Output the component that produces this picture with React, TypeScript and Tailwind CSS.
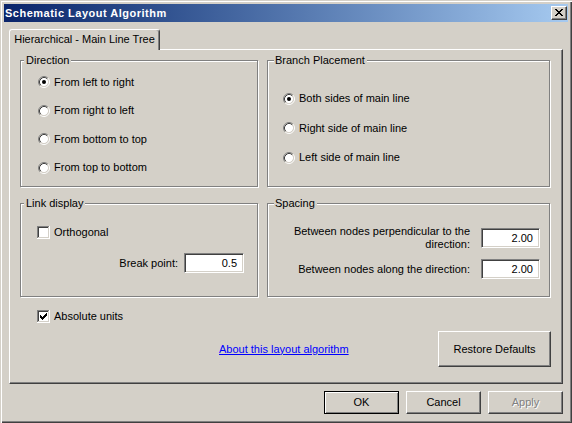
import React from "react";

function Radio({ checked }: { checked?: boolean }) {
  return (
    <svg width="12" height="12" viewBox="0 0 12 12" className="shrink-0 block">
      <circle cx="6" cy="6" r="4.2" fill="#fff" />
      <path d="M2.11 9.89 A5.5 5.5 0 0 1 9.89 2.11" stroke="#808080" fill="none" />
      <path d="M9.89 2.11 A5.5 5.5 0 0 1 2.11 9.89" stroke="#fff" fill="none" />
      <path d="M2.82 9.18 A4.5 4.5 0 0 1 9.18 2.82" stroke="#404040" fill="none" />
      <path d="M9.18 2.82 A4.5 4.5 0 0 1 2.82 9.18" stroke="#d4d0c8" fill="none" />
      {checked && <circle cx="6" cy="6" r="2" fill="#000" />}
    </svg>
  );
}

const CHECK_PX: [number, number][] = [
  [9, 3], [8, 4], [9, 4], [3, 5], [7, 5], [8, 5], [9, 5],
  [3, 6], [4, 6], [6, 6], [7, 6], [8, 6],
  [3, 7], [4, 7], [5, 7], [6, 7], [7, 7],
  [4, 8], [5, 8], [6, 8], [5, 9],
];

function Check({ checked }: { checked?: boolean }) {
  return (
    <svg width="13" height="13" viewBox="0 0 13 13" shapeRendering="crispEdges" className="shrink-0 block">
      <rect x="0" y="0" width="13" height="13" fill="#fff" />
      <rect x="0" y="0" width="12" height="1" fill="#808080" />
      <rect x="0" y="0" width="1" height="12" fill="#808080" />
      <rect x="1" y="1" width="10" height="1" fill="#404040" />
      <rect x="1" y="1" width="1" height="10" fill="#404040" />
      <rect x="1" y="11" width="11" height="1" fill="#d4d0c8" />
      <rect x="11" y="1" width="1" height="11" fill="#d4d0c8" />
      {checked &&
        CHECK_PX.map(([x, y], i) => (
          <rect key={i} x={x} y={y} width="1" height="1" fill="#000" />
        ))}
    </svg>
  );
}

const X_PX: [number, number][] = [
  [0, 0], [1, 0], [6, 0], [7, 0],
  [1, 1], [2, 1], [5, 1], [6, 1],
  [2, 2], [3, 2], [4, 2], [5, 2],
  [3, 3], [4, 3],
  [2, 4], [3, 4], [4, 4], [5, 4],
  [1, 5], [2, 5], [5, 5], [6, 5],
  [0, 6], [1, 6], [6, 6], [7, 6],
];

function CloseBtn() {
  return (
    <div className="mr-[1px] w-[16px] h-[14px] bg-[#d4d0c8] border border-t-white border-l-white border-r-[#404040] border-b-[#404040] shadow-[inset_-1px_-1px_0_#808080] flex">
      <svg width="14" height="12" viewBox="0 0 14 12" shapeRendering="crispEdges" className="block">
        {X_PX.map(([x, y], i) => (
          <rect key={i} x={x + 3} y={y + 2} width="1" height="1" fill="#000" />
        ))}
      </svg>
    </div>
  );
}

function Group({
  label,
  labelPos,
  className,
  children,
}: {
  label: string;
  labelPos: string;
  className: string;
  children: React.ReactNode;
}) {
  return (
    <div
      className={
        "relative border border-[#808080] shadow-[inset_1px_1px_0_#fff,1px_1px_0_#fff] " + className
      }
    >
      <span className={"absolute -top-[7px] pr-[2px] bg-[#d4d0c8] whitespace-nowrap " + labelPos}>
        {label}
      </span>
      {children}
    </div>
  );
}

function Field({ value, className }: { value: string; className: string }) {
  return (
    <div
      className={
        "h-[20px] bg-white border border-t-[#808080] border-l-[#808080] border-r-white border-b-white shadow-[inset_1px_1px_0_#404040,inset_-1px_-1px_0_#d4d0c8] flex items-center justify-end pr-[6px] shrink-0 " +
        className
      }
    >
      {value}
    </div>
  );
}

function Button({
  children,
  className,
  isDefault,
  disabled,
}: {
  children: React.ReactNode;
  className: string;
  isDefault?: boolean;
  disabled?: boolean;
}) {
  const frame = isDefault
    ? "border border-black shadow-[inset_1px_1px_0_#fff,inset_-1px_-1px_0_#808080]"
    : "border border-t-white border-l-white border-r-[#404040] border-b-[#404040] shadow-[inset_-1px_-1px_0_#808080]";
  const text = disabled ? "text-[#808080] [text-shadow:1px_1px_0_#fff]" : "text-black";
  return (
    <div className={"bg-[#d4d0c8] flex items-center justify-center " + frame + " " + text + " " + className}>
      {children}
    </div>
  );
}

export default function App() {
  const dirs = ["From left to right", "From right to left", "From bottom to top", "From top to bottom"];
  const branches = ["Both sides of main line", "Right side of main line", "Left side of main line"];
  return (
    <div className="w-[572px] h-[423px] bg-[#d4d0c8] p-[4px] text-[11px] leading-[13px] text-black [font-family:'Liberation_Sans',Arial,sans-serif] shadow-[inset_1px_1px_0_#d4d0c8,inset_2px_2px_0_#fff,inset_-1px_-1px_0_#404040,inset_-2px_-2px_0_#808080]">
      {/* Title bar */}
      <div className="h-[18px] flex items-center justify-between bg-gradient-to-r from-[#0a246a] to-[#a6caf0]">
        <span className="pl-[1px] font-bold text-white tracking-[0.5px]">Schematic Layout Algorithm</span>
        <CloseBtn />
      </div>

      <div className="pl-[5px] pr-[5px] pt-[7px]">
        {/* Tab */}
        <div className="relative z-10 -mb-[1px] h-[21px] w-[151px] bg-[#d4d0c8] rounded-t-[3px] border-l border-t border-r border-l-white border-t-white border-r-[#404040] shadow-[inset_-1px_0_0_#808080] flex items-center justify-center pb-[1px]">
          Hierarchical - Main Line Tree
        </div>

        {/* Tab panel */}
        <div className="h-[335px] border border-t-white border-l-white border-r-[#404040] border-b-[#404040] shadow-[inset_-1px_-1px_0_#808080] pl-[10px] pt-[10px] flex flex-col">
          <div className="grid grid-cols-[238px_283px] grid-rows-[127px_94px] gap-x-[9px] gap-y-[16px]">
            <Group label="Direction" labelPos="left-[3px] pl-[2px]" className="">
              <div className="flex flex-col pt-[7px] pl-[17px]">
                {dirs.map((d, i) => (
                  <div key={d} className="h-[28.5px] flex items-center gap-[4px]">
                    <Radio checked={i === 0} />
                    <span>{d}</span>
                  </div>
                ))}
              </div>
            </Group>

            <Group label="Branch Placement" labelPos="left-[6px] pl-[1px]" className="">
              <div className="flex flex-col pt-[23px] pl-[15px]">
                {branches.map((d, i) => (
                  <div key={d} className="h-[29.5px] flex items-center gap-[4px]">
                    <Radio checked={i === 0} />
                    <span>{d}</span>
                  </div>
                ))}
              </div>
            </Group>

            <Group label="Link display" labelPos="left-[3px] pl-[2px]" className="">
              <div className="flex flex-col pt-[22px]">
                <div className="h-[13px] flex items-center gap-[4px] pl-[16px]">
                  <Check />
                  <span>Orthogonal</span>
                </div>
                <div className="mt-[14px] flex items-center justify-end gap-[6px] pr-[13px]">
                  <span>Break point:</span>
                  <Field value="0.5" className="w-[60px]" />
                </div>
              </div>
            </Group>

            <Group label="Spacing" labelPos="left-[6px] pl-[1px]" className="">
              <div className="flex flex-col pt-[21px] pr-[9px]">
                <div className="h-[26px] flex items-center justify-end gap-[11px]">
                  <span className="text-right">
                    Between nodes perpendicular to the
                    <br />
                    direction:
                  </span>
                  <Field value="2.00" className="w-[59px]" />
                </div>
                <div className="mt-[8px] h-[20px] flex items-center justify-end gap-[11px]">
                  <span className="text-right">Between nodes along the direction:</span>
                  <Field value="2.00" className="w-[59px]" />
                </div>
              </div>
            </Group>
          </div>

          <div className="mt-[13px] ml-[17px] h-[13px] flex items-center gap-[4px]">
            <Check checked />
            <span>Absolute units</span>
          </div>

          <div className="mt-[8px] h-[36px] flex items-center">
            <span className="ml-[199px] text-[#0000ff] underline">About this layout algorithm</span>
            <Button className="ml-auto mr-[11px] w-[113px] h-[36px]">Restore Defaults</Button>
          </div>
        </div>

        {/* Dialog buttons */}
        <div className="mt-[7px] flex justify-end gap-[7px]">
          <Button isDefault className="w-[75px] h-[23px]">OK</Button>
          <Button className="w-[75px] h-[23px]">Cancel</Button>
          <Button disabled className="w-[75px] h-[23px]">Apply</Button>
        </div>
      </div>
    </div>
  );
}
